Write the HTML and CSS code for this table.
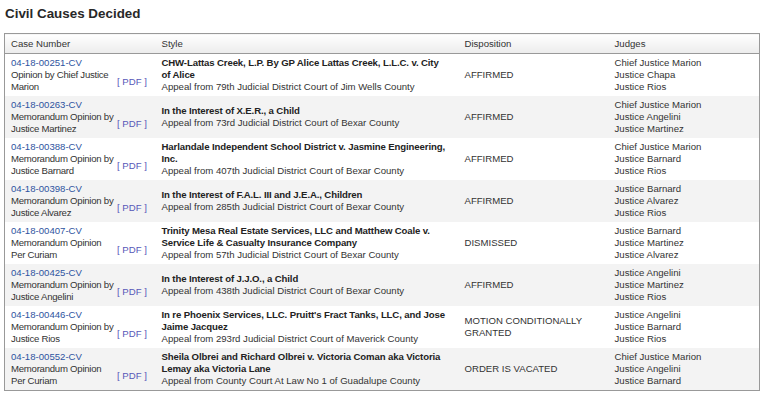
FILE: index.html
```html
<!DOCTYPE html>
<html>
	<head>
		<title>Civil Causes Decided</title>
		<link rel="stylesheet" href="styles.css">
	</head>
	<body>
		<div id="content">
			<h2 id="title">Civil Causes Decided</h2>
			<table id="causes">
				<colgroup>
					<col class="col-case">
					<col class="col-style">
					<col class="col-disp">
					<col class="col-judges">
				</colgroup>
				<thead>
					<tr>
						<th>Case Number</th>
						<th>Style</th>
						<th>Disposition</th>
						<th>Judges</th>
					</tr>
				</thead>
				<tbody>
					<tr>
						<td>
							<a class="case-link" href="#">04-18-00251-CV</a>
							<div class="opinion">
								<div class="opinion-text">Opinion by Chief Justice<br>Marion</div>
								<a class="pdf-link" href="#">[ PDF ]</a>
							</div>
						</td>
						<td>
							<div class="style-title">CHW-Lattas Creek, L.P. By GP Alice Lattas Creek, L.L.C. v. City<br>of Alice</div>
							<div>Appeal from 79th Judicial District Court of Jim Wells County</div>
						</td>
						<td>AFFIRMED</td>
						<td>Chief Justice Marion<br>Justice Chapa<br>Justice Rios</td>
					</tr>
					<tr>
						<td>
							<a class="case-link" href="#">04-18-00263-CV</a>
							<div class="opinion">
								<div class="opinion-text">Memorandum Opinion by<br>Justice Martinez</div>
								<a class="pdf-link" href="#">[ PDF ]</a>
							</div>
						</td>
						<td>
							<div class="style-title">In the Interest of X.E.R., a Child</div>
							<div>Appeal from 73rd Judicial District Court of Bexar County</div>
						</td>
						<td>AFFIRMED</td>
						<td>Chief Justice Marion<br>Justice Angelini<br>Justice Martinez</td>
					</tr>
					<tr>
						<td>
							<a class="case-link" href="#">04-18-00388-CV</a>
							<div class="opinion">
								<div class="opinion-text">Memorandum Opinion by<br>Justice Barnard</div>
								<a class="pdf-link" href="#">[ PDF ]</a>
							</div>
						</td>
						<td>
							<div class="style-title">Harlandale Independent School District v. Jasmine Engineering, Inc.</div>
							<div>Appeal from 407th Judicial District Court of Bexar County</div>
						</td>
						<td>AFFIRMED</td>
						<td>Chief Justice Marion<br>Justice Barnard<br>Justice Rios</td>
					</tr>
					<tr>
						<td>
							<a class="case-link" href="#">04-18-00398-CV</a>
							<div class="opinion">
								<div class="opinion-text">Memorandum Opinion by<br>Justice Alvarez</div>
								<a class="pdf-link" href="#">[ PDF ]</a>
							</div>
						</td>
						<td>
							<div class="style-title">In the Interest of F.A.L. III and J.E.A., Children</div>
							<div>Appeal from 285th Judicial District Court of Bexar County</div>
						</td>
						<td>AFFIRMED</td>
						<td>Justice Barnard<br>Justice Alvarez<br>Justice Rios</td>
					</tr>
					<tr>
						<td>
							<a class="case-link" href="#">04-18-00407-CV</a>
							<div class="opinion">
								<div class="opinion-text">Memorandum Opinion<br>Per Curiam</div>
								<a class="pdf-link" href="#">[ PDF ]</a>
							</div>
						</td>
						<td>
							<div class="style-title">Trinity Mesa Real Estate Services, LLC and Matthew Coale v. Service Life &amp; Casualty Insurance Company</div>
							<div>Appeal from 57th Judicial District Court of Bexar County</div>
						</td>
						<td>DISMISSED</td>
						<td>Justice Barnard<br>Justice Martinez<br>Justice Alvarez</td>
					</tr>
					<tr>
						<td>
							<a class="case-link" href="#">04-18-00425-CV</a>
							<div class="opinion">
								<div class="opinion-text">Memorandum Opinion by<br>Justice Angelini</div>
								<a class="pdf-link" href="#">[ PDF ]</a>
							</div>
						</td>
						<td>
							<div class="style-title">In the Interest of J.J.O., a Child</div>
							<div>Appeal from 438th Judicial District Court of Bexar County</div>
						</td>
						<td>AFFIRMED</td>
						<td>Justice Angelini<br>Justice Martinez<br>Justice Rios</td>
					</tr>
					<tr>
						<td>
							<a class="case-link" href="#">04-18-00446-CV</a>
							<div class="opinion">
								<div class="opinion-text">Memorandum Opinion by<br>Justice Rios</div>
								<a class="pdf-link" href="#">[ PDF ]</a>
							</div>
						</td>
						<td>
							<div class="style-title">In re Phoenix Services, LLC. Pruitt's Fract Tanks, LLC, and Jose Jaime Jacquez</div>
							<div>Appeal from 293rd Judicial District Court of Maverick County</div>
						</td>
						<td>MOTION CONDITIONALLY<br>GRANTED</td>
						<td>Justice Angelini<br>Justice Barnard<br>Justice Rios</td>
					</tr>
					<tr>
						<td>
							<a class="case-link" href="#">04-18-00552-CV</a>
							<div class="opinion">
								<div class="opinion-text">Memorandum Opinion<br>Per Curiam</div>
								<a class="pdf-link" href="#">[ PDF ]</a>
							</div>
						</td>
						<td>
							<div class="style-title">Sheila Olbrei and Richard Olbrei v. Victoria Coman aka Victoria Lemay aka Victoria Lane</div>
							<div>Appeal from County Court At Law No 1 of Guadalupe County</div>
						</td>
						<td>ORDER IS VACATED</td>
						<td>Chief Justice Marion<br>Justice Angelini<br>Justice Barnard</td>
					</tr>
				</tbody>
			</table>
		</div>
	</body>
</html>
```

FILE: styles.css
```css
html {
	font-size: 10px;
}

body {
	font-family: "Liberation Sans", Arial, sans-serif;
	margin: 0;
	color: rgb(51, 51, 51);
	background-color: #fff;
}

#content {
	padding: 0 8px 0 4px;
}

#title {
	font-size: 13.4px;
	line-height: 17px;
	font-weight: bold;
	margin: 5px 0 11px 1px;
	color: rgb(40, 40, 40);
}

#causes {
	width: 756px;
	border-collapse: collapse;
	border: solid 1px rgb(153, 153, 153);
	font-size: 9.6px;
	line-height: 12px;
}

.col-case {
	width: 151px;
}

.col-style {
	width: 303px;
}

.col-disp {
	width: 150px;
}

#causes th {
	text-align: left;
	font-weight: normal;
	height: 19px;
	padding: 0 6px;
	background: linear-gradient(to bottom, rgb(255, 255, 255), rgb(236, 236, 236));
	border-bottom: solid 1px rgb(153, 153, 153);
	vertical-align: middle;
}

#causes td {
	padding: 3px 6px;
	height: 36px;
	vertical-align: middle;
}

#causes tbody tr:nth-child(even) {
	background-color: rgb(243, 243, 243);
}

a {
	text-decoration: none;
}

.case-link {
	color: rgb(46, 84, 160);
}

.opinion {
	display: flex;
	align-items: center;
}

.opinion-text {
	width: 105px;
	flex: none;
	white-space: nowrap;
	letter-spacing: -0.25px;
}

.pdf-link {
	color: rgb(88, 88, 184);
	padding-left: 1px;
	padding-top: 2px;
}

.style-title {
	font-weight: bold;
	color: rgb(34, 34, 34);
	letter-spacing: -0.12px;
}
```
